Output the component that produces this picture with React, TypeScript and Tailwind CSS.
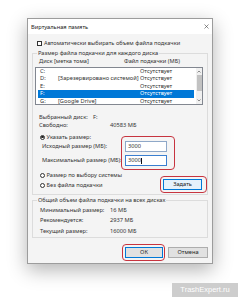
import React from 'react';

const drives = [
  { letter: 'C:', label: '', size: 'Отсутствует' },
  { letter: 'D:', label: '[Зарезервировано системой]', size: 'Отсутствует' },
  { letter: 'E:', label: '', size: 'Отсутствует' },
  { letter: 'F:', label: '', size: 'Отсутствует', selected: true },
  { letter: 'G:', label: '[Google Drive]', size: 'Отсутствует' },
];

// red annotation frame drawn over the screenshot
function Mark({ className }: { className: string }) {
  return <span className={`absolute border-[1.5px] border-[#c7343f] rounded-[4px] pointer-events-none ${className}`} />;
}

function Radio({ checked, label }: { checked?: boolean; label: string }) {
  return (
    <div className="flex items-center h-[8px] gap-[1.5px]">
      <span className="w-[5px] h-[5px] rounded-full border-[0.8px] border-[#333] bg-white flex items-center justify-center">
        {checked && <span className="w-[2.5px] h-[2.5px] rounded-full bg-[#222]" />}
      </span>
      <span className="leading-[8px] whitespace-nowrap">{label}</span>
    </div>
  );
}

function Chevron({ up }: { up?: boolean }) {
  return (
    <svg width="4" height="3" viewBox="0 0 4 3" className="block">
      <path d={up ? 'M0.5 2.5 L2 1 L3.5 2.5' : 'M0.5 0.5 L2 2 L3.5 0.5'} fill="none" stroke="#606060" strokeWidth="0.7" />
    </svg>
  );
}

export default function App() {
  return (
    <div className="w-[241px] h-[300px] overflow-hidden bg-white pt-[18px] font-['Noto_Sans',sans-serif] text-[5.7px] text-[#333]">
      <div className="ml-[27px] w-[186px] h-[246px] border border-[#9c9c9c] bg-[#f4f4f4] shadow-[0_6px_18px_rgba(0,0,0,0.3)] flex flex-col">
        {/* title bar */}
        <div className="h-[15px] bg-white flex items-center justify-between pl-[3px] pr-[3.5px]">
          <span className="text-[#222] leading-[8px]">Виртуальная память</span>
          <svg width="5" height="5" viewBox="0 0 5 5">
            <path d="M0.5 0.5 L4.5 4.5 M4.5 0.5 L0.5 4.5" stroke="#444" strokeWidth="0.6" />
          </svg>
        </div>

        <div className="flex flex-col px-[4px] whitespace-nowrap">
          <div className="mt-[5px] ml-[5px] h-[8px] flex items-center gap-[2px]">
            <span className="w-[5px] h-[5px] border-[0.8px] border-[#333] bg-white" />
            <span className="leading-[8px]">Автоматически выбирать объем файла подкачки</span>
          </div>

          <fieldset className="mt-[2px] border border-[#dcdcdc] pb-[5px]">
            <legend className="ml-[4px] px-[1px] leading-[8px]">Размер файла подкачки для каждого диска</legend>
            <div className="mt-[1px] h-[7px] leading-[7px] flex pl-[6px]">
              <span className="w-[85px]">Диск [метка тома]</span>
              <span>Файл подкачки (МБ)</span>
            </div>

            <div className="mt-[2px] ml-[2px] mr-[4px] h-[38px] border border-[#828790] bg-white flex">
              <div className="flex-1 px-[2px]">
                {drives.map((d) => (
                  <div
                    key={d.letter}
                    className={`h-[7.4px] leading-[7.4px] flex ${d.selected ? 'bg-[#0078d7] text-white' : ''}`}
                  >
                    <span className="w-[20px] pl-[2px]">{d.letter}</span>
                    <span className="w-[82px]">{d.label}</span>
                    <span>{d.size}</span>
                  </div>
                ))}
              </div>
              <div className="w-[6px] bg-[#f0f0f0] flex flex-col items-center">
                <div className="h-[7px] flex items-center"><Chevron up /></div>
                <div className="w-[5px] h-[16px] bg-[#c2c2c2]" />
                <div className="flex-1" />
                <div className="h-[7px] flex items-center"><Chevron /></div>
              </div>
            </div>

            <div className="mt-[8px] pl-[6px] h-[8px] leading-[8px] flex">
              <span className="w-[54px]">Выбранный диск:</span>
              <span>F:</span>
            </div>
            <div className="pl-[6px] h-[8px] leading-[8px] flex">
              <span className="w-[71px]">Свободно:</span>
              <span>40583 МБ</span>
            </div>

            <div className="mt-[4px] pl-[7px]">
              <Radio checked label="Указать размер:" />
            </div>

            <div className="flex">
              <div className="w-[92px] pl-[9px] flex flex-col gap-[3px]">
                <span className="h-[11px] leading-[11px]">Исходный размер (МБ):</span>
                <span className="h-[11px] leading-[11px]">Максимальный размер (МБ):</span>
              </div>
              <div className="relative flex flex-col gap-[3px]">
                <div className="w-[42px] h-[11px] border border-[#8fa8c8] bg-white pl-[2px] leading-[9px]">3000</div>
                <div className="w-[42px] h-[11px] border border-[#3b7fd0] bg-white pl-[2px] leading-[9px] flex items-center">
                  3000<span className="w-[0.6px] h-[6px] bg-[#111]" />
                </div>
                <Mark className="-left-[4px] -top-[5px] -right-[8px] -bottom-[4px]" />
              </div>
            </div>

            <div className="mt-[5px] flex items-end">
              <div className="flex-1 pl-[7px] flex flex-col gap-[2px]">
                <Radio label="Размер по выбору системы" />
                <Radio label="Без файла подкачки" />
              </div>
              <div className="relative mr-[5px] -mb-[1px]">
                <div className="w-[39px] h-[11px] border border-[#0078d7] bg-[#e5f1fb] flex items-center justify-center text-[#222]">Задать</div>
                <Mark className="-left-[3px] -top-[3px] -right-[5px] -bottom-[3px]" />
              </div>
            </div>
          </fieldset>

          <fieldset className="mt-[1px] border border-[#dcdcdc] pb-[1px]">
            <legend className="ml-[4px] px-[1px] leading-[8px]">Общий объем файла подкачки на всех дисках</legend>
            <div className="mt-[0.5px] pl-[7px] flex flex-col">
              <div className="h-[10.5px] leading-[10.5px] flex">
                <span className="w-[70px]">Минимальный размер:</span>
                <span>16 МБ</span>
              </div>
              <div className="h-[10.5px] leading-[10.5px] flex">
                <span className="w-[70px]">Рекомендуется:</span>
                <span>2937 МБ</span>
              </div>
              <div className="h-[10.5px] leading-[10.5px] flex">
                <span className="w-[70px]">Текущий размер:</span>
                <span>16000 МБ</span>
              </div>
            </div>
          </fieldset>

          <div className="mt-[9px] flex justify-end gap-[5px]">
            <div className="relative">
              <div className="w-[38px] h-[11px] border border-[#0078d7] bg-[#e1e1e1] flex items-center justify-center text-[#222]">ОК</div>
              <Mark className="-left-[3px] -top-[3px] -right-[2px] -bottom-[3px]" />
            </div>
            <div className="w-[40px] h-[11px] border border-[#adadad] bg-[#e1e1e1] flex items-center justify-center text-[#222]">Отмена</div>
          </div>
        </div>
      </div>

      <div className="mt-[19px] flex justify-end pr-[3px]">
        <div className="w-[66px] h-[14px] bg-[#cdcdcd] text-white text-[7.5px] font-['Liberation_Sans',sans-serif] flex items-center justify-center">
          TrashExpert.ru
        </div>
      </div>
    </div>
  );
}
